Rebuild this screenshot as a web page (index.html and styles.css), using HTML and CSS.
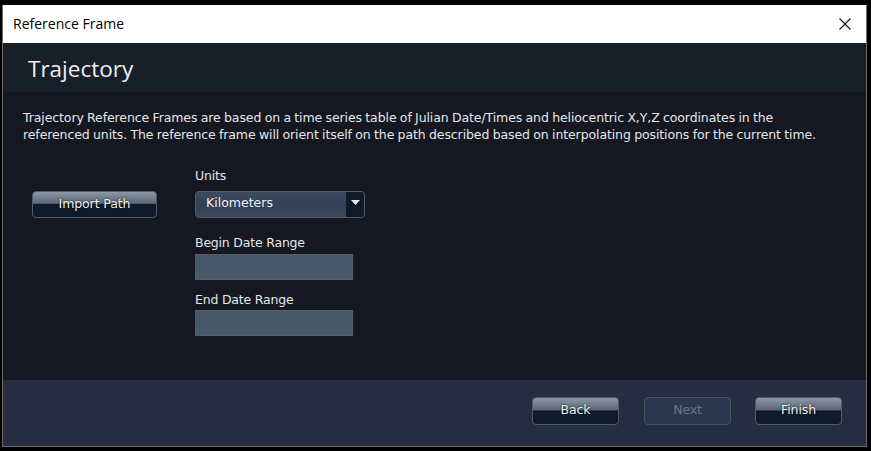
FILE: index.html
```html
<!DOCTYPE html>
<html>
<head>
<meta charset="utf-8">
<link rel="stylesheet" href="styles.css">
</head>
<body>
<div class="window">
  <div class="titlebar">
    <span class="title">Reference Frame</span>
    <svg class="close" width="12" height="12" viewBox="0 0 12 12"><path d="M0.5 0.5 L11.5 11.5 M11.5 0.5 L0.5 11.5" stroke="#111" stroke-width="1.1" fill="none"/></svg>
  </div>
  <div class="header">Trajectory</div>
  <div class="content">
    <p class="desc">Trajectory Reference Frames are based on a time series table of Julian Date/Times and heliocentric X,Y,Z coordinates in the<br>referenced units. The reference frame will orient itself on the path described based on interpolating positions for the current time.</p>
    <div class="form">
      <div class="leftcol">
        <button class="btn import">Import Path</button>
      </div>
      <div class="fields">
        <div class="label units">Units</div>
        <div class="select">
          <span>Kilometers</span>
          <span class="arrow"><svg width="9" height="5" viewBox="0 0 9 5"><path d="M0 0 H9 L4.5 5 Z" fill="#e8ecf2"/></svg></span>
        </div>
        <div class="label begin">Begin Date Range</div>
        <div class="input"></div>
        <div class="label end">End Date Range</div>
        <div class="input"></div>
      </div>
    </div>
  </div>
  <div class="footer">
    <button class="btn">Back</button>
    <button class="btn disabled">Next</button>
    <button class="btn">Finish</button>
  </div>
</div>
</body>
</html>
```

FILE: styles.css
```css
html, body {
  margin: 0;
  padding: 0;
  background: #000;
  width: 871px;
  height: 451px;
  overflow: hidden;
}
.window {
  margin: 5px 4px 0 2px;
  width: 863px;
  height: 441px;
  border-left: 1px solid #6b6b6b;
  border-right: 1px solid #6b6b6b;
  border-bottom: 1px solid #6b6b6b;
  display: flex;
  flex-direction: column;
  font-family: "DejaVu Sans", "Liberation Sans", sans-serif;
}
.titlebar {
  height: 38px;
  background: #fff;
  display: flex;
  align-items: center;
  justify-content: space-between;
  padding: 0 15px 0 10px;
  flex: none;
}
.title {
  font-family: "Open Sans", "Liberation Sans", sans-serif;
  font-size: 14px;
  color: #000;
  position: relative;
  top: -1px;
}
.close { display: block; }
.header {
  height: 49px;
  background: #171f29;
  color: #eef0f2;
  font-family: "Open Sans", "Liberation Sans", sans-serif;
  font-size: 22.5px;
  padding-left: 25px;
  display: flex;
  align-items: center;
  flex: none;
  box-sizing: border-box;
  padding-top: 2px;
}
.content {
  flex: 1;
  background: #151821;
  padding: 17px 0 0 20px;
}
.desc {
  margin: 0;
  color: #e4e6ea;
  font-size: 12.5px;
  line-height: 17px;
  white-space: nowrap;
  letter-spacing: -0.1px;
  word-spacing: -0.5px;
}
.form {
  display: flex;
  margin-top: 25px;
}
.leftcol {
  width: 172px;
  padding-left: 9px;
  padding-top: 23px;
  box-sizing: border-box;
}
.fields {
  display: flex;
  flex-direction: column;
  align-items: flex-start;
}
.label {
  color: #e4e6ea;
  font-size: 12.5px;
  letter-spacing: -0.2px;
  line-height: 15px;
}
.label.units { margin-bottom: 8px; }
.label.begin { margin-top: 17px; margin-bottom: 4px; }
.label.end { margin-top: 12px; margin-bottom: 3px; }
.btn {
  font-family: "DejaVu Sans", "Liberation Sans", sans-serif;
  font-size: 12.5px;
  color: #f0f2f5;
  border: 1px solid #4e5a6e;
  border-radius: 4px;
  background: linear-gradient(to bottom, #8d97a6 0%, #5d6878 45%, #0f1b2b 50%, #0e1a2a 100%);
  padding: 0 0 3px 0;
  text-shadow: 0 0 2px #000;
  letter-spacing: -0.1px;
}
.import {
  width: 125px;
  height: 27px;
}
.select {
  width: 170px;
  height: 27px;
  box-sizing: border-box;
  border: 1px solid #4e5a6e;
  border-radius: 4px;
  background: linear-gradient(to bottom, #3e4a5e 0%, #344055 50%, #3a4760 100%);
  display: flex;
  align-items: center;
  justify-content: space-between;
  color: #eef0f2;
  font-size: 12.5px;
  padding-left: 10px;
  overflow: hidden;
}
.select span:first-child { position: relative; top: -2px; }
.arrow {
  width: 18px;
  height: 100%;
  background: #0f1a28;
  display: flex;
  align-items: flex-start;
  justify-content: center;
  padding-top: 8px;
  box-sizing: border-box;
}
.arrow svg { display: block; }
.input {
  width: 158px;
  height: 26px;
  box-sizing: border-box;
  background: #475868;
  border: 1px solid #5a5d62;
}
.footer {
  height: 66px;
  background: #262d40;
  flex: none;
  display: flex;
  justify-content: flex-end;
  align-items: flex-start;
  padding: 17px 24px 0 0;
  gap: 25px;
  box-sizing: border-box;
}
.footer .btn {
  width: 87px;
  height: 28px;
}
.footer .btn:last-child { margin-left: -1px; }
.btn.disabled {
  background: #2c3850;
  border-color: #465268;
  color: #6a7485;
  text-shadow: none;
}
```
